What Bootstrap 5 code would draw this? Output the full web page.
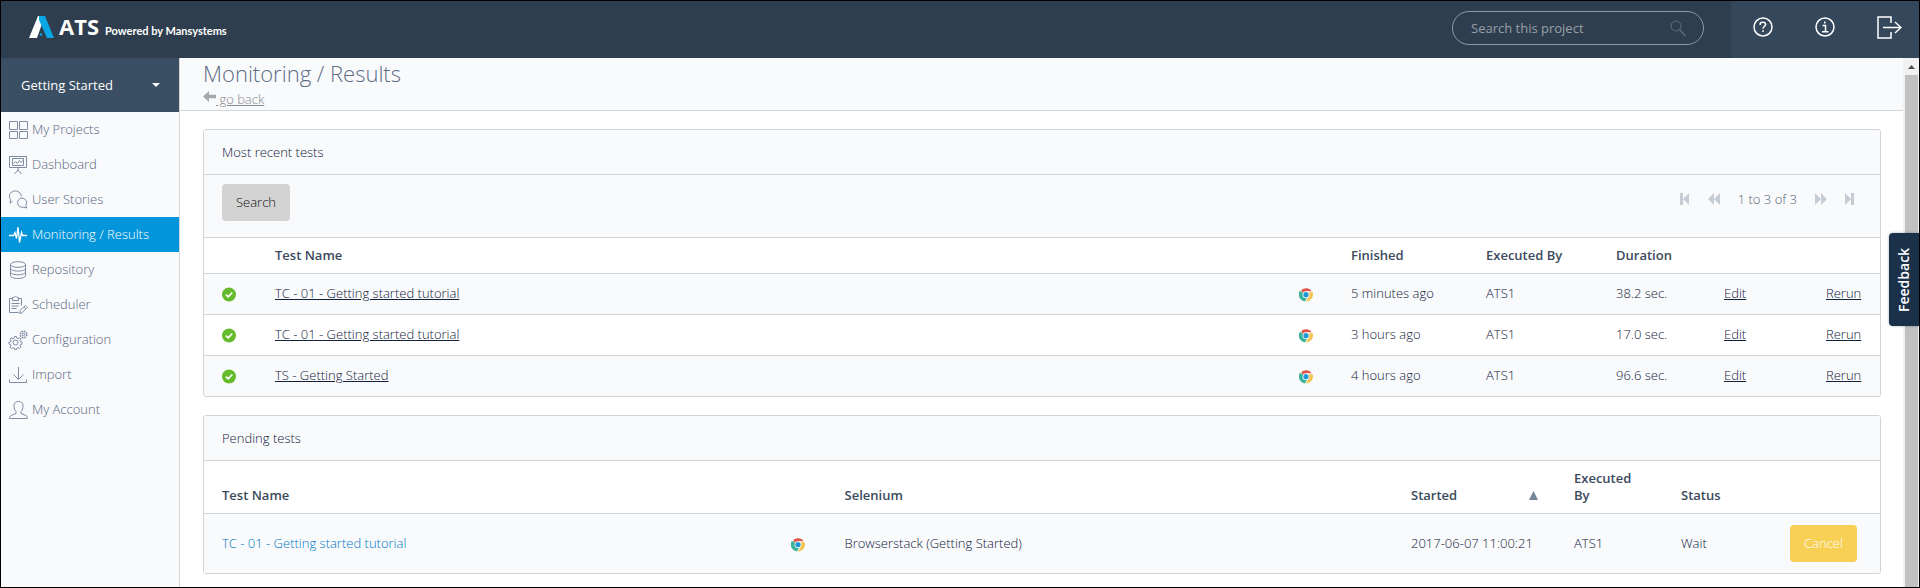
<!DOCTYPE html>
<html lang="en">
<head>
<meta charset="utf-8">
<meta name="viewport" content="width=device-width, initial-scale=1">
<title>ATS - Monitoring / Results</title>
<link href="https://cdn.jsdelivr.net/npm/bootstrap@5.3.0/dist/css/bootstrap.min.css" rel="stylesheet">
<style>
  :root { --line: #d2d4d6; --panel: #f9fafc; --heading: #3b4a5c; --ink: #12213a; --muted: #56657f; }
  body { font: 300 13px/17px "Open Sans", sans-serif; color: var(--ink); border: 1px solid #000; }
  a { color: inherit; }
  svg { display: block; flex: none; }
  .line-icon { fill: none; stroke: currentColor; }

  .topbar { background: #2e3e4e; height: 57px; }
  .brand { color: #fff; padding: 0 0 5px 28px; }
  .brand-name { font: 700 22px/18px "Open Sans", sans-serif; }
  .brand-tag { font: 700 11px/16px Lato, sans-serif; margin-left: 6px; }
  .search-pill { width: 252px; height: 34px; border: 1px solid #8e98a3; border-radius: 17px; padding: 0 17px 0 18px; margin: 10px 27px 0 0; color: #5f6e7c; }
  .search-pill input { background: none; border: 0; outline: 0; color: #fff; min-width: 0; padding: 0; }
  .search-pill input::placeholder { color: #98a0a8; opacity: 1; }
  .tools { background: #35475b; width: 188px; padding: 0 17px 5px 22px; color: #fff; }
  .tools button, .pager button { background: none; border: 0; padding: 0; color: inherit; }

  .side { width: 179px; background: var(--panel); border-right: 1px solid var(--line); color: var(--muted); }
  .side svg { color: #7f8ca3; }
  .project { background: #3a4f63; color: #fff; height: 54px; border: 0; padding: 0 19px 0 20px; }
  .side .nav-link { height: 35px; color: inherit; padding: 0 0 0 7px; gap: 4px; font-weight: inherit; }
  .side .nav-link.active, .side .nav-link.active svg { background: #0595db; color: #fff; }

  .page-head { background: var(--panel); border-bottom: 1px solid var(--line); padding: 0 23px; height: 53px; }
  .page-head h1 { font-size: 22px; line-height: 31px; font-weight: 300; color: #5c6d85; margin: 0; }
  .page-head a { color: #87898c; margin-top: 2px; }
  .panels { padding: 18px 22px 13px 23px; gap: 18px; }
  .panel { border: 1px solid var(--line); border-radius: 3px; overflow: hidden; }
  .panel h2 { font-size: 13px; line-height: 17px; font-weight: inherit; margin: 0; padding: 14px 18px 13px; background: var(--panel); border-bottom: 1px solid var(--line); }
  .toolbar { background: var(--panel); padding: 9px 25px 16px 18px; border-bottom: 1px solid var(--line); }
  .pager { height: 30px; color: #c5ccd4; gap: 18px; }
  .pager span { color: #566274; }
  .btn-flat { font-size: 13px; line-height: 17px; font-weight: inherit; padding: 10px 14px; border: 0; border-radius: 4px; }
  .btn-gray, .btn-gray:hover { background: #d3d3d3; color: #111; }
  .btn-amber, .btn-amber:hover { background: #f8d055; color: #fff; }

  .grid { table-layout: fixed; width: 100%; border-collapse: separate; border-spacing: 0; }
  .grid th { padding: 9px 10px; font-weight: 600; color: var(--heading); vertical-align: bottom; border-bottom: 1px solid var(--line); }
  .grid td { height: 41px; padding: 0 10px 2px; border-bottom: 1px solid var(--line); vertical-align: middle; }
  .grid td svg { margin-top: 2px; }
  .grid th:first-child, .grid td:first-child { padding-left: 18px; }
  .grid tbody tr:nth-child(odd) { background: var(--panel); }
  .grid tbody tr:last-child td { border-bottom: 0; height: 40px; }
  .grid.pending tbody tr:last-child td { height: 59px; padding-bottom: 0; }
  .c-status { width: 61px; } .c-icon { width: 52px; } .c-finished { width: 135px; }
  .c-by { width: 130px; } .c-duration { width: 108px; } .c-edit { width: 102px; } .c-rerun { width: 64px; }
  .pending .c-icon { width: 54px; }
  .c-selenium { width: 33.8%; } .c-started { width: 163px; } .c-by2 { width: 107px; }
  .c-state { width: 109px; } .c-cancel { width: 100px; }

  .link-pending { color: #0077c8; text-decoration: none; }

  .scroller { width: 16px; background: #f1f1f1; color: #505050; padding: 0 1px 0 2px; }
  .thumb { background: #c1c1c1; }
  .feedback { right: 1px; top: 233px; z-index: 10; width: 30px; height: 93px; border: 0; padding: 0; background: #1b3049; color: #fff; border-radius: 0 4px 4px 0; font-size: 14px; line-height: 30px; font-weight: 600; writing-mode: vertical-rl; transform: rotate(180deg); box-shadow: 0 0 3px rgba(0,0,0,.3); }
</style>
</head>
<body class="d-flex flex-column min-vh-100">

<svg width="0" height="0" class="position-absolute" aria-hidden="true">
  <symbol id="ok" viewBox="0 0 14 14"><circle cx="7" cy="7" r="7" fill="#66bb2c"/><path d="M3.900 7.200 6.200 9.400 10.300 5" fill="none" stroke="#fff" stroke-width="1.700"/></symbol>
  <symbol id="chrome" viewBox="0 0 14 14">
    <path d="M7 7 .94 3.200A7 7 0 0 0 6.200 14L9 9.500z" fill="#3cb39b"/>
    <path d="M7 7 9 4.400h4.500A7 7 0 0 1 6.600 14L9.600 9z" fill="#f2c553"/>
    <path d="M2.200 2.600A7 7 0 0 1 13.100 4.200H7L4.200 6z" fill="#e0554a"/>
    <circle cx="7" cy="7.200" r="3.400" fill="#fff"/><circle cx="7" cy="7.200" r="2.600" fill="#1f97d4"/>
    <path d="M7.500 4.200h6M8.800 10 6.500 13.800" stroke="#fff" stroke-width=".9"/>
  </symbol>
</svg>

<header class="topbar d-flex align-items-stretch">
  <a href="#" class="brand d-flex align-items-center text-decoration-none me-auto">
    <span class="d-flex align-items-end">
      <svg width="26" height="24" viewBox="0 0 26 24"><path d="M9 1h4l1 5-6 17H0z" fill="#fff"/><path d="M10 1h6l9 22h-7L10 5z" fill="#0ba7e6"/><circle cx="12" cy="19.500" r="1.300" fill="#0ba7e6"/></svg>
      <span class="d-flex align-items-baseline ms-1"><span class="brand-name">ATS</span><span class="brand-tag">Powered by Mansystems</span></span>
    </span>
  </a>
  <div class="search-pill d-flex align-items-center">
    <input type="text" class="flex-grow-1" placeholder="Search this project" aria-label="Search this project">
    <svg class="line-icon" width="16" height="17" viewBox="0 0 16 17"><circle cx="6" cy="6" r="5"/><path d="m9.500 9.500 6 6.500" stroke-width="1.300"/></svg>
  </div>
  <div class="tools d-flex align-items-center justify-content-between">
    <button type="button" aria-label="Help"><svg class="line-icon" width="20" height="20" viewBox="0 0 20 20" stroke-width="1.500"><circle cx="10" cy="10" r="9"/><path d="M7.200 8V6.200Q8 5.200 10 5.200q2.600 0 2.600 2.200c0 1.800-2.600 1.900-2.600 4.300M10 13.200v1.800"/></svg></button>
    <button type="button" aria-label="Information"><svg class="line-icon" width="20" height="20" viewBox="0 0 20 20" stroke-width="1.500"><circle cx="10" cy="10" r="9"/><path d="M7.500 8.500h3v6.200M7 14.800h6.500M9.800 4.600v1.900"/></svg></button>
    <button type="button" aria-label="Sign out"><svg class="line-icon" width="25" height="23" viewBox="0 0 25 23" stroke-width="1.500"><path d="M14 7V1H1v21h13v-6M6 11.500h18M18 6l6 5.500-6 5.500"/></svg></button>
  </div>
</header>

<div class="d-flex flex-grow-1">
  <aside class="side flex-shrink-0">
    <button type="button" class="project d-flex w-100 align-items-center justify-content-between"><span>Getting Started</span><svg width="8" height="4" viewBox="0 0 8 4"><path d="M0 0h8L4 4z" fill="#fff"/></svg></button>
    <nav class="nav flex-column flex-nowrap">
      <a class="nav-link d-flex align-items-center" href="#"><svg class="line-icon" width="20" height="20" viewBox="0 0 20 20"><path d="M1.500 1.500h8v8h-8zM11.500 1.500h8v8h-8zM1.500 11.500h8v7h-8zM11.500 11.500h8v7h-8z"/></svg>My Projects</a>
      <a class="nav-link d-flex align-items-center" href="#"><svg class="line-icon" width="20" height="20" viewBox="0 0 20 20"><path d="M1 1.500h18M1.500 1.500v11h17v-11M4.500 3.500h11v7h-11zM5.500 8.500l2-2 2 2 2-3 1.500 2 1.500-2M10 12.500v3M10 15l-3.500 4M10 15l3.500 4"/></svg>Dashboard</a>
      <a class="nav-link d-flex align-items-center" href="#"><svg class="line-icon" width="20" height="20" viewBox="0 0 20 20"><path d="M4.500 11.200 2 13.200 2.600 9.500A6 5.300 0 1 1 13.300 6.500M13.800 8a5 4.700 0 0 1 4 7.300l1 2.700-3-.8A5 4.700 0 1 1 13.800 8z"/></svg>User Stories</a>
      <a class="nav-link active d-flex align-items-center" href="#" aria-current="page"><svg class="line-icon" width="20" height="20" viewBox="0 0 20 20" stroke-width="1.300"><path d="M1 10.500h4.500l1.500-3 1.500 6L10 2l1.500 15.500 2-10 1 3H19"/></svg>Monitoring / Results</a>
      <a class="nav-link d-flex align-items-center" href="#"><svg class="line-icon" width="20" height="20" viewBox="0 0 20 20"><ellipse cx="10" cy="4.500" rx="7.500" ry="2.800"/><path d="M2.500 4.500v11.200c0 1.600 3.300 2.800 7.500 2.800s7.500-1.200 7.500-2.800V4.500M2.500 8.300c0 1.600 3.300 2.800 7.500 2.800s7.500-1.200 7.500-2.800M2.500 12c0 1.600 3.300 2.800 7.500 2.800s7.500-1.200 7.500-2.800"/></svg>Repository</a>
      <a class="nav-link d-flex align-items-center" href="#"><svg class="line-icon" width="20" height="20" viewBox="0 0 20 20"><path d="M4.500 3.500h-3v14h9M10.500 3.500h3v7M4.500 5.500v-3h1.500L7.500 1l1.500 1.500h1.500v3zM3.500 8.500h8M3.500 11h7M3.500 13.500h5M11.500 18.500l.8-3 5-5 2 2-5 5zM15.800 12l2 2"/></svg>Scheduler</a>
      <a class="nav-link d-flex align-items-center" href="#"><svg class="line-icon" width="20" height="20" viewBox="0 0 20 20"><circle cx="7.500" cy="12.500" r="2.500"/><path d="M6.500 6.500h2l.4 1.700 1.200.5 1.500-1 1.400 1.400-1 1.500.5 1.200 1.500.3v2l-1.500.4-.5 1.200 1 1.400-1.400 1.400-1.500-.9-1.200.5-.4 1.500h-2l-.4-1.500-1.200-.5-1.500.9L2 17.100l1-1.400-.5-1.200L1 14.100v-2l1.500-.3.500-1.200-1-1.500 1.400-1.400 1.500 1 1.200-.5z"/><circle cx="15.500" cy="4.500" r="1.200"/><circle cx="15.500" cy="4.500" r="3.200" stroke-width="1.600" stroke-dasharray="1.600 .9"/></svg>Configuration</a>
      <a class="nav-link d-flex align-items-center" href="#"><svg class="line-icon" width="20" height="20" viewBox="0 0 20 20"><path d="M10.500 2v12M5.500 9.500l5 5 5-5M1.500 14.500v3h17v-3"/></svg>Import</a>
      <a class="nav-link d-flex align-items-center" href="#"><svg class="line-icon" width="20" height="20" viewBox="0 0 20 20"><path d="M8 11.500C6.500 10 6 8 6 5.500 6 3 7.500 1.500 10.500 1.500S15 3 15 5.500c0 2.500-.5 4.500-2 6v2l5 2c1 .5 1.300 1.500 1.300 3H1.500c0-1.500.5-2.500 1.500-3l5-2z"/></svg>My Account</a>
    </nav>
  </aside>

  <main class="flex-grow-1 bg-white">
    <div class="page-head">
      <h1>Monitoring / Results</h1>
      <a href="#" class="d-flex"><svg width="13" height="11" viewBox="0 0 13 11"><path d="M0 5.500 6 0v3.800h7v3.400H6V11z" fill="#a5a7aa"/></svg><span>&nbsp;go back</span></a>
    </div>

    <div class="panels d-flex flex-column">
      <section class="panel">
        <h2>Most recent tests</h2>
        <div class="toolbar d-flex justify-content-between align-items-start">
          <button type="button" class="btn btn-flat btn-gray">Search</button>
          <div class="pager d-flex align-items-center">
            <button type="button" aria-label="First page"><svg width="10" height="12" viewBox="0 0 10 12" fill="currentColor"><path d="M0 0h3v12H0zM9 0v12L3 6z"/></svg></button>
            <button type="button" aria-label="Previous page"><svg width="12" height="12" viewBox="0 0 12 12" fill="currentColor"><path d="M6 0v12L0 6zM12 0v12L6 6z"/></svg></button>
            <span>1 to 3 of 3</span>
            <button type="button" aria-label="Next page"><svg width="12" height="12" viewBox="0 0 12 12" fill="currentColor"><path d="M0 0v12l6-6zM6 0v12l6-6z"/></svg></button>
            <button type="button" aria-label="Last page"><svg width="10" height="12" viewBox="0 0 10 12" fill="currentColor"><path d="M6 0h3v12H6zM0 0v12l6-6z"/></svg></button>
          </div>
        </div>
        <table class="grid">
          <colgroup><col class="c-status"><col><col class="c-icon"><col class="c-finished"><col class="c-by"><col class="c-duration"><col class="c-edit"><col class="c-rerun"></colgroup>
          <thead><tr><th></th><th>Test Name</th><th></th><th>Finished</th><th>Executed By</th><th>Duration</th><th></th><th></th></tr></thead>
          <tbody>
            <tr><td><svg width="14" height="15" role="img" aria-label="Passed"><use href="#ok"/></svg></td><td><a href="#">TC - 01 - Getting started tutorial</a></td><td><svg width="14" height="15" role="img" aria-label="Chrome"><use href="#chrome"/></svg></td><td>5 minutes ago</td><td>ATS1</td><td>38.2 sec.</td><td><a href="#">Edit</a></td><td><a href="#">Rerun</a></td></tr>
            <tr><td><svg width="14" height="15" role="img" aria-label="Passed"><use href="#ok"/></svg></td><td><a href="#">TC - 01 - Getting started tutorial</a></td><td><svg width="14" height="15" role="img" aria-label="Chrome"><use href="#chrome"/></svg></td><td>3 hours ago</td><td>ATS1</td><td>17.0 sec.</td><td><a href="#">Edit</a></td><td><a href="#">Rerun</a></td></tr>
            <tr><td><svg width="14" height="15" role="img" aria-label="Passed"><use href="#ok"/></svg></td><td><a href="#">TS - Getting Started</a></td><td><svg width="14" height="15" role="img" aria-label="Chrome"><use href="#chrome"/></svg></td><td>4 hours ago</td><td>ATS1</td><td>96.6 sec.</td><td><a href="#">Edit</a></td><td><a href="#">Rerun</a></td></tr>
          </tbody>
        </table>
      </section>

      <section class="panel">
        <h2>Pending tests</h2>
        <table class="grid pending">
          <colgroup><col><col class="c-icon"><col class="c-selenium"><col class="c-started"><col class="c-by2"><col class="c-state"><col class="c-cancel"></colgroup>
          <thead><tr><th>Test Name</th><th></th><th>Selenium</th><th><span class="d-flex align-items-center justify-content-between pe-3">Started<svg width="9" height="9" viewBox="0 0 9 9"><path d="M4.500 0 9 9H0z" fill="#75859b"/></svg></span></th><th>Executed<br>By</th><th>Status</th><th></th></tr></thead>
          <tbody>
            <tr><td><a href="#" class="link-pending">TC - 01 - Getting started tutorial</a></td><td><svg width="14" height="15" role="img" aria-label="Chrome"><use href="#chrome"/></svg></td><td>Browserstack (Getting Started)</td><td>2017-06-07 11:00:21</td><td>ATS1</td><td>Wait</td><td><button type="button" class="btn btn-flat btn-amber">Cancel</button></td></tr>
          </tbody>
        </table>
      </section>
    </div>
  </main>

  <div class="scroller d-flex flex-column flex-shrink-0" aria-hidden="true">
    <svg width="13" height="17" viewBox="0 0 13 17"><path d="M3 11h7L6.500 7z" fill="currentColor"/></svg>
    <div class="thumb flex-grow-1"></div>
  </div>
</div>

<button type="button" class="feedback position-absolute">Feedback</button>
<script src="https://cdn.jsdelivr.net/npm/bootstrap@5.3.0/dist/js/bootstrap.bundle.min.js"></script>
</body>
</html>
